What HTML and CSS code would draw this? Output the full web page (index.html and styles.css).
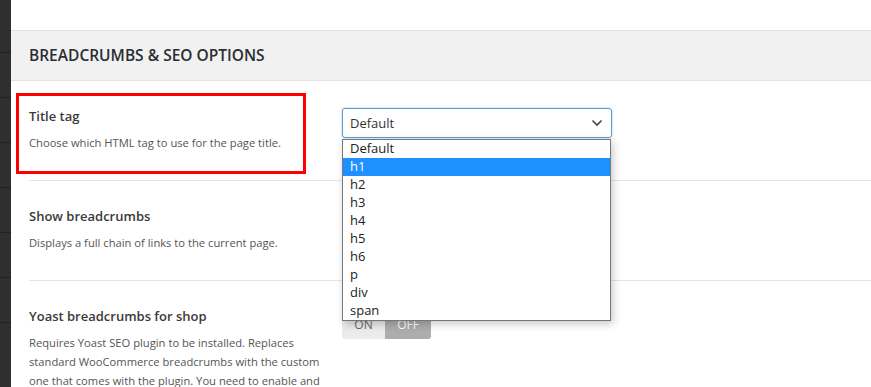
FILE: index.html
```html
<!DOCTYPE html>
<html lang="en">
<head>
    <meta charset="UTF-8">
    <title>Breadcrumbs &amp; SEO Options</title>
    <link rel="stylesheet" href="styles.css">
</head>
<body>
    <div class="sidebar">
        <div class="menu-item"></div>
        <div class="menu-item"></div>
        <div class="menu-item"></div>
        <div class="menu-item"></div>
        <div class="menu-item"></div>
        <div class="menu-item"></div>
        <div class="menu-item"></div>
    </div>
    <div class="main">
        <div class="page-top">
            <h1>Typography settings</h1>
        </div>
        <div class="section-head">BREADCRUMBS &amp; SEO OPTIONS</div>

        <div class="row">
            <div class="info">
                <div class="label">Title tag</div>
                <div class="desc">Choose which HTML tag to use for the page title.</div>
            </div>
            <div class="control">
                <div class="select">
                    <span>Default</span>
                    <svg width="12" height="8" viewBox="0 0 12 8"><path d="M1.5 1.5 L6 6 L10.5 1.5" fill="none" stroke="#444" stroke-width="1.6"/></svg>
                </div>
                <ul class="options">
                    <li>Default</li>
                    <li class="selected">h1</li>
                    <li>h2</li>
                    <li>h3</li>
                    <li>h4</li>
                    <li>h5</li>
                    <li>h6</li>
                    <li>p</li>
                    <li>div</li>
                    <li>span</li>
                </ul>
            </div>
            <div class="highlight"></div>
        </div>

        <div class="row">
            <div class="info">
                <div class="label">Show breadcrumbs</div>
                <div class="desc">Displays a full chain of links to the current page.</div>
            </div>
            <div class="control">
                <div class="switch"><span class="on">ON</span><span class="off">OFF</span></div>
            </div>
        </div>

        <div class="row last">
            <div class="info">
                <div class="label">Yoast breadcrumbs for shop</div>
                <div class="desc">Requires Yoast SEO plugin to be installed. Replaces standard WooCommerce breadcrumbs with the custom one that comes with the plugin. You need to enable and</div>
            </div>
            <div class="control">
                <div class="switch"><span class="on">ON</span><span class="off">OFF</span></div>
            </div>
        </div>
    </div>
</body>
</html>
```

FILE: styles.css
```css
body {
    margin: 0;
    display: flex;
    height: 387px;
    overflow: hidden;
    font-family: "Open Sans", "Noto Sans", sans-serif;
    color: #333;
    background: #fff;
}
.sidebar {
    width: 11px;
    flex-shrink: 0;
    background: #2f2f2f;
    padding-top: 8px;
}
.menu-item {
    height: 44px;
    border-bottom: 1px solid #222;
}
.main {
    flex: 1;
    position: relative;
}
.page-top {
    height: 30px;
    overflow: hidden;
}
.page-top h1 {
    margin: -25px 0 0 30px;
    font-size: 20px;
    font-weight: 600;
    line-height: 24px;
    color: #333;
}
.section-head {
    height: 49px;
    line-height: 49px;
    padding-left: 18px;
    background: #f1f1f1;
    border-top: 1px solid #e2e2e2;
    border-bottom: 1px solid #e2e2e2;
    font-size: 15.5px;
    font-weight: 600;
    color: #2a2e33;
}
.row {
    position: relative;
    display: flex;
    margin-left: 18px;
    height: 99px;
    border-bottom: 1px solid #e5e5e5;
}
.row.last {
    border-bottom: none;
}
.info {
    width: 313px;
    flex-shrink: 0;
    padding-top: 26px;
}
.label {
    font-size: 13px;
    font-weight: 600;
    line-height: 18px;
    color: #3a3a3a;
}
.desc {
    margin-top: 8px;
    font-size: 11.2px;
    line-height: 19px;
    color: #555;
    width: 300px;
}
.control {
    position: relative;
    padding-top: 27px;
}
.select {
    width: 253px;
    height: 28px;
    padding: 0 8px 0 7px;
    border: 1px solid #5b9dd9;
    border-radius: 3px;
    box-shadow: 0 0 2px rgba(30, 140, 190, 0.5);
    display: flex;
    align-items: center;
    justify-content: space-between;
    font-size: 13px;
    color: #333;
}
.options {
    position: absolute;
    top: 58px;
    left: 0;
    width: 267px;
    margin: 0;
    padding: 0;
    list-style: none;
    background: #fff;
    border: 1px solid #767676;
    box-shadow: 2px 3px 8px rgba(0, 0, 0, 0.22);
    font-size: 13px;
    z-index: 2;
}
.options li {
    height: 18px;
    line-height: 17px;
    padding-left: 7px;
    color: #222;
}
.options li.selected {
    background: #1e90ff;
    color: #fff;
}
.switch {
    display: flex;
    margin-top: 3px;
    width: 89px;
    height: 28px;
    border-radius: 3px;
    overflow: hidden;
    font-size: 12px;
    line-height: 28px;
    text-align: center;
}
.switch .on {
    width: 43px;
    background: #ebebeb;
    color: #666;
}
.switch .off {
    width: 46px;
    background: #adadad;
    color: #fff;
}
.highlight {
    position: absolute;
    left: -13px;
    top: 12px;
    width: 284px;
    height: 75px;
    border: 3px solid #f00;
}
```
